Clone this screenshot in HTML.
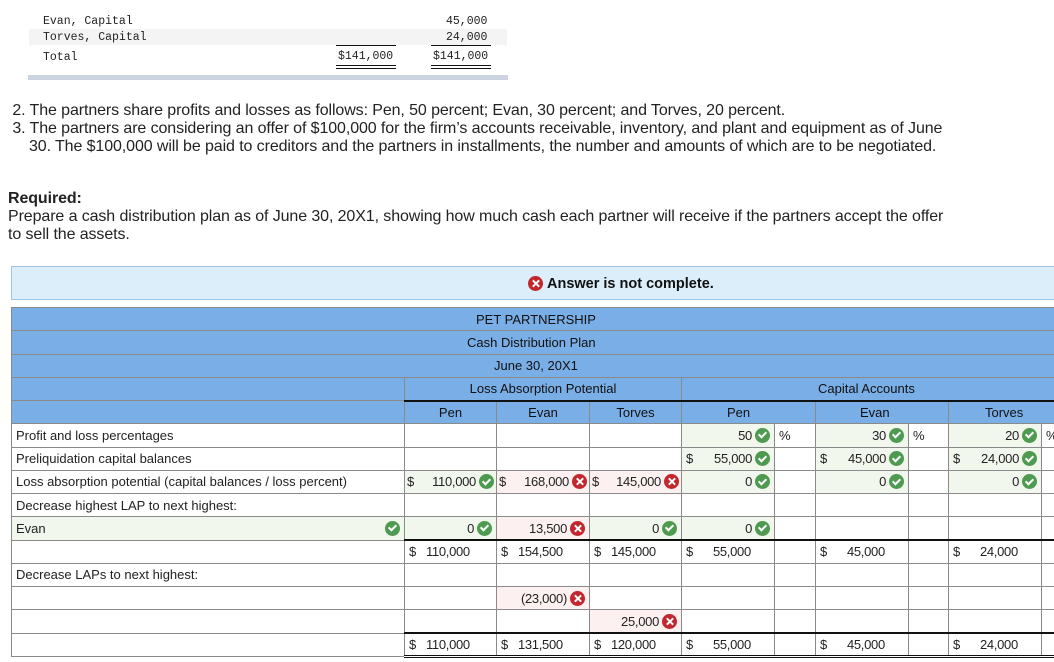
<!DOCTYPE html>
<html><head><meta charset="utf-8"><style>
body{margin:0;width:1054px;height:662px;overflow:hidden;background:#fff;font-family:"Liberation Sans",sans-serif;color:#222;position:relative}
.mono{position:absolute;font-family:"Liberation Mono",monospace;font-size:11.5px;color:#222}
.p{position:absolute;left:8px;font-size:16px;line-height:18px;color:#222;letter-spacing:-0.1px}
.ban{position:absolute;left:11px;top:266px;width:1050px;height:34px;background:#dbeefa;border:1px solid #9cc6e6;box-sizing:border-box}
.bant{position:absolute;left:528px;top:275px;font-weight:bold;font-size:14.5px;line-height:18px;color:#111}
table{position:absolute;left:11px;top:307px;width:1060px;border-collapse:collapse;table-layout:fixed;font-size:13px}
td{border:1px solid #8a8a8a;height:23.25px;padding:0 4px;white-space:nowrap;overflow:hidden;box-sizing:border-box}
tr.h td{background:#7aaee6;text-align:center;color:#111}
.g{background:#f2f7ee}.r{background:#fdf0f0}
.f{display:flex;align-items:center;letter-spacing:-0.3px}
.f .n{flex:1;text-align:right}
.ok,.no{display:inline-block;width:15px;height:15px;border-radius:50%;margin-left:3px;position:relative;vertical-align:middle;flex:none}
.ok{background:#4e9a50}.no{background:#c3272d}
.ok:after{content:"";position:absolute;left:5px;top:2.5px;width:3px;height:6px;border:solid #fff;border-width:0 2px 2px 0;transform:rotate(45deg)}
.no:before,.no:after{content:"";position:absolute;left:6.5px;top:3px;width:2px;height:9px;background:#fff;transform:rotate(45deg)}
.no:after{transform:rotate(-45deg)}
.tb td.t{border-top:2px solid #111}
.dbl td.t{border-bottom:3px double #111}
</style></head><body>
<div style="position:absolute;left:29px;top:29px;width:478px;height:16px;background:#f4f4f4"></div>
<div class="mono" style="left:43px;top:15px">Evan, Capital</div>
<div class="mono" style="left:43px;top:31px">Torves, Capital</div>
<div class="mono" style="left:43px;top:51px">Total</div>
<div class="mono" style="left:446px;top:15px">45,000</div>
<div class="mono" style="left:446px;top:31px">24,000</div>
<div style="position:absolute;left:336px;top:45px;width:60px;border-top:1px solid #111"></div>
<div style="position:absolute;left:431px;top:45px;width:60px;border-top:1px solid #111"></div>
<div class="mono" style="left:338px;top:50px">$141,000</div>
<div class="mono" style="left:433px;top:50px">$141,000</div>
<div style="position:absolute;left:336px;top:65px;width:60px;height:2px;border-top:1px solid #111;border-bottom:1px solid #111"></div>
<div style="position:absolute;left:431px;top:65px;width:60px;height:2px;border-top:1px solid #111;border-bottom:1px solid #111"></div>
<div style="position:absolute;left:28px;top:75px;width:480px;height:5px;background:#ccd3e0"></div>

<div class="p" style="top:102px">&nbsp;2. The partners share profits and losses as follows: Pen, 50 percent; Evan, 30 percent; and Torves, 20 percent.</div>
<div class="p" style="top:120px">&nbsp;3. The partners are considering an offer of $100,000 for the firm’s accounts receivable, inventory, and plant and equipment as of June</div>
<div class="p" style="top:138px;left:29px">30. The $100,000 will be paid to creditors and the partners in installments, the number and amounts of which are to be negotiated.</div>
<div class="p" style="top:190px;font-weight:bold">Required:</div>
<div class="p" style="top:208px">Prepare a cash distribution plan as of June 30, 20X1, showing how much cash each partner will receive if the partners accept the offer</div>
<div class="p" style="top:226px">to sell the assets.</div>

<div class="ban"></div>
<div class="bant"><span class="no" style="margin:0 4px 0 0;vertical-align:-3px"></span>Answer is not complete.</div>

<table>
<colgroup><col style="width:393px"><col style="width:92px"><col style="width:93px"><col style="width:92px"><col style="width:93px"><col style="width:41px"><col style="width:93px"><col style="width:40px"><col style="width:93px"><col style="width:30px"></colgroup>
<tr class="h"><td colspan="10" style="text-align:left"><span style="position:relative;left:460px">PET PARTNERSHIP</span></td></tr>
<tr class="h"><td colspan="10" style="text-align:left"><span style="position:relative;left:451px">Cash Distribution Plan</span></td></tr>
<tr class="h"><td colspan="10" style="text-align:left"><span style="position:relative;left:478px">June 30, 20X1</span></td></tr>
<tr class="h"><td></td><td colspan="3" style="border-bottom:2px solid #111">Loss Absorption Potential</td><td colspan="6" style="border-bottom:2px solid #111;text-align:left;padding-left:136px">Capital Accounts</td></tr>
<tr class="h"><td></td><td>Pen</td><td>Evan</td><td>Torves</td><td colspan="2" style="text-align:left;padding-left:45px">Pen</td><td colspan="2" style="text-align:left;padding-left:44px">Evan</td><td colspan="2" style="text-align:left;padding-left:36px">Torves</td></tr>
<tr><td>Profit and loss percentages</td><td></td><td></td><td></td><td class="g"><div class="f"><span class="n">50</span><span class="ok"></span></div></td><td>%</td><td class="g"><div class="f"><span class="n">30</span><span class="ok"></span></div></td><td>%</td><td class="g"><div class="f"><span class="n">20</span><span class="ok"></span></div></td><td>%</td></tr>
<tr><td>Preliquidation capital balances</td><td></td><td></td><td></td><td class="g"><div class="f">$<span class="n">55,000</span><span class="ok"></span></div></td><td></td><td class="g"><div class="f">$<span class="n">45,000</span><span class="ok"></span></div></td><td></td><td class="g"><div class="f">$<span class="n">24,000</span><span class="ok"></span></div></td><td></td></tr>
<tr><td>Loss absorption potential (capital balances / loss percent)</td><td class="g" style="padding:0 2px"><div class="f">$<span class="n">110,000</span><span class="ok"></span></div></td><td class="r" style="padding:0 2px"><div class="f">$<span class="n">168,000</span><span class="no"></span></div></td><td class="r" style="padding:0 2px"><div class="f">$<span class="n">145,000</span><span class="no"></span></div></td><td class="g"><div class="f"><span class="n">0</span><span class="ok"></span></div></td><td></td><td class="g"><div class="f"><span class="n">0</span><span class="ok"></span></div></td><td></td><td class="g"><div class="f"><span class="n">0</span><span class="ok"></span></div></td><td></td></tr>
<tr><td>Decrease highest LAP to next highest:</td><td></td><td></td><td></td><td></td><td></td><td></td><td></td><td></td><td></td></tr>
<tr><td class="g"><div class="f" style="letter-spacing:0"><span style="flex:1">Evan</span><span class="ok"></span></div></td><td class="g"><div class="f"><span class="n">0</span><span class="ok"></span></div></td><td class="r"><div class="f"><span class="n">13,500</span><span class="no"></span></div></td><td class="g"><div class="f"><span class="n">0</span><span class="ok"></span></div></td><td class="g"><div class="f"><span class="n">0</span><span class="ok"></span></div></td><td></td><td></td><td></td><td></td><td></td></tr>
<tr class="tb"><td></td><td class="t"><div class="f">$<span class="n" style="text-align:left;padding-left:10px">110,000</span></div></td><td class="t"><div class="f">$<span class="n" style="text-align:left;padding-left:10px">154,500</span></div></td><td class="t"><div class="f">$<span class="n" style="text-align:left;padding-left:10px">145,000</span></div></td><td class="t"><div class="f">$<span class="n" style="text-align:left;padding-left:20px">55,000</span></div></td><td class="t"></td><td class="t"><div class="f">$<span class="n" style="text-align:left;padding-left:20px">45,000</span></div></td><td class="t"></td><td class="t"><div class="f">$<span class="n" style="text-align:left;padding-left:20px">24,000</span></div></td><td class="t"></td></tr>
<tr><td>Decrease LAPs to next highest:</td><td></td><td></td><td></td><td></td><td></td><td></td><td></td><td></td><td></td></tr>
<tr><td></td><td></td><td class="r"><div class="f"><span class="n">(23,000)</span><span class="no"></span></div></td><td></td><td></td><td></td><td></td><td></td><td></td><td></td></tr>
<tr><td></td><td></td><td></td><td class="r"><div class="f"><span class="n">25,000</span><span class="no"></span></div></td><td></td><td></td><td></td><td></td><td></td><td></td></tr>
<tr class="tb dbl"><td></td><td class="t"><div class="f">$<span class="n" style="text-align:left;padding-left:10px">110,000</span></div></td><td class="t"><div class="f">$<span class="n" style="text-align:left;padding-left:10px">131,500</span></div></td><td class="t"><div class="f">$<span class="n" style="text-align:left;padding-left:10px">120,000</span></div></td><td class="t"><div class="f">$<span class="n" style="text-align:left;padding-left:20px">55,000</span></div></td><td class="t"></td><td class="t"><div class="f">$<span class="n" style="text-align:left;padding-left:20px">45,000</span></div></td><td class="t"></td><td class="t"><div class="f">$<span class="n" style="text-align:left;padding-left:20px">24,000</span></div></td><td class="t"></td></tr>
</table>
</body></html>
